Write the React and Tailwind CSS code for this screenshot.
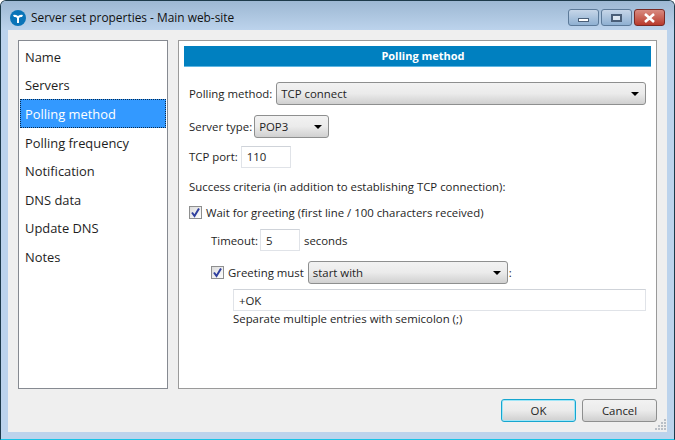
import { useMemo } from "react";

const navItems = [
  { label: "Name", height: "h-[29px]" },
  { label: "Servers", height: "h-[28px]" },
  { label: "Polling method", height: "h-[29px]" },
  { label: "Polling frequency", height: "h-[29px]" },
  { label: "Notification", height: "h-[28px]" },
  { label: "DNS data", height: "h-[29px]" },
  { label: "Update DNS", height: "h-[28px]" },
  { label: "Notes", height: "h-[29px]" },
];

function Select({ value, className }) {
  return (
    <div
      className={`flex items-center justify-between h-[23px] pl-[4px] pr-[6px] rounded-[3px] border border-[#8e8f8f] bg-gradient-to-b from-[#f2f2f2] via-[#ebebeb] to-[#d0d0d0] ${className}`}
    >
      <span>{value}</span>
      <span className="w-0 h-0 border-x-[4px] border-x-transparent border-t-[4px] border-t-black" />
    </div>
  );
}

function TextBox({ value, className }) {
  return (
    <div
      className={`flex items-center h-[22px] pl-[5px] bg-white border border-[#e0e3e8] border-t-[#cfd3d9] ${className}`}
    >
      {value}
    </div>
  );
}

function Checkbox() {
  return (
    <div className="flex items-center justify-center w-[13px] h-[13px] border border-[#8e8f8f] bg-gradient-to-br from-[#dcdcdc] to-white">
      <svg width="11" height="11" viewBox="0 0 11 11">
        <path d="M2 5.5 L4.5 9 L9 1.5" fill="none" stroke="#2f3f9e" strokeWidth="2" />
      </svg>
    </div>
  );
}

function CaptionButton({ children, className }) {
  return (
    <div
      className={`flex items-center justify-center h-[17px] rounded-[3px] border border-[#5c7a99] ${className}`}
    >
      {children}
    </div>
  );
}

function DialogButton({ label, className }) {
  return (
    <div
      className={`flex items-center justify-center w-[75px] h-[23px] rounded-[3px] bg-gradient-to-b from-[#f2f2f2] via-[#ebebeb] to-[#cfcfcf] ${className}`}
    >
      {label}
    </div>
  );
}

function ResizeGrip() {
  const dots = useMemo(() => {
    const out = [];
    for (let row = 0; row < 4; row++) {
      for (let col = 3 - row; col < 4; col++) {
        out.push([col * 3 + 1, row * 3 + 1]);
      }
    }
    return out;
  }, []);

  return (
    <svg className="absolute right-[1px] bottom-[2px]" width="12" height="12" viewBox="0 0 12 12">
      {dots.map(([x, y]) => (
        <rect key={`${x}-${y}`} x={x} y={y} width="2" height="2" fill="#b9bfc6" />
      ))}
    </svg>
  );
}

export default function App() {
  return (
    <div className="flex flex-col w-[675px] h-[440px] overflow-hidden border border-[#1d3a4a] border-b-[#17c3e6] rounded-t-[6px] bg-[#bcd3ec] font-['Open_Sans','Noto_Sans',sans-serif] text-[11.4px] text-[#1e1e1e]">
      {/* TITLE BAR */}
      <div className="flex items-center h-[29px] shrink-0 pt-[4px] pl-[9px] pr-[9px] bg-gradient-to-b from-[#9db8d3] to-[#bcd3ec]">
        <div className="flex items-center justify-center w-[16px] h-[16px] rounded-full bg-[#0a74b8]">
          <svg width="12" height="12" viewBox="0 0 12 12">
            <path d="M1 3 Q3 2 6 4 Q9 2 11 3 L10 5 Q8 4.5 7 6 L7 11 L5 11 L5 6 Q4 4.5 2 5 Z" fill="white" />
          </svg>
        </div>
        <span className="ml-[5px] text-[11.9px] text-[#111]">Server set properties - Main web-site</span>
        <div className="flex gap-[2px] ml-auto">
          <CaptionButton className="w-[31px] bg-gradient-to-b from-[#c6d6e8] to-[#8fb0d2]">
            <div className="w-[11px] h-[4px] mt-[4px] bg-white border border-[#4a5f78]" />
          </CaptionButton>
          <CaptionButton className="w-[31px] bg-gradient-to-b from-[#c6d6e8] to-[#8fb0d2]">
            <div className="w-[11px] h-[8px] bg-white/60 border-2 border-[#4a5f78]" />
          </CaptionButton>
          <CaptionButton className="w-[31px] border-[#7a2a24] bg-gradient-to-b from-[#d88a80] to-[#b8392c]">
            <svg width="13" height="10" viewBox="0 0 13 10">
              <path d="M2 1 L11 9 M11 1 L2 9" stroke="white" strokeWidth="2.6" />
            </svg>
          </CaptionButton>
        </div>
      </div>

      {/* CLIENT AREA */}
      <div className="relative flex flex-col flex-1 mx-[7px] mb-[7px] pt-[10px] px-[10px] bg-[#efefef]">
        <div className="flex gap-[10px] h-[349px]">
          {/* NAV LIST */}
          <div className="w-[150px] p-[1px] bg-white border border-[#868a91]">
            <div className="flex flex-col text-[12.9px]">
              {navItems.map((item) => (
                <div
                  key={item.label}
                  className={`flex items-center pt-[2px] ${item.height} ${
                    item.label === "Polling method"
                      ? "pl-[4px] bg-[#3399ff] text-white border border-dotted border-[#0b2a4a]"
                      : "pl-[5px]"
                  }`}
                >
                  {item.label}
                </div>
              ))}
            </div>
          </div>

          {/* MAIN PANEL */}
          <div className="flex-1 p-[5px] bg-white border border-[#9a9a9a]">
            <div className="flex items-center justify-center h-[21px] pl-[11px] bg-[#0080c0] border-b border-[#5fb6e2] font-bold text-[11px] text-white">
              Polling method
            </div>

            <div className="flex flex-col pl-[5px] pr-[5px] pt-[15px]">
              <div className="flex items-center gap-[4px]">
                <span>Polling method:</span>
                <Select value="TCP connect" className="flex-1" />
              </div>

              <div className="flex items-center gap-[2px] mt-[10px]">
                <span>Server type:</span>
                <Select value="POP3" className="w-[75px]" />
              </div>

              <div className="flex items-center gap-[3px] mt-[8px]">
                <span>TCP port:</span>
                <TextBox value="110" className="w-[50px]" />
              </div>

              <div className="mt-[10px] leading-[18px]">
                Success criteria (in addition to establishing TCP connection):
              </div>

              <div className="flex items-center gap-[4px] mt-[8px]">
                <Checkbox />
                <span>Wait for greeting (first line / 100 characters received)</span>
              </div>

              <div className="flex items-center gap-[2px] mt-[8px] pl-[22px]">
                <span>Timeout:</span>
                <TextBox value="5" className="w-[40px]" />
                <span className="ml-[2px]">seconds</span>
              </div>

              <div className="flex items-center mt-[10px] pl-[22px]">
                <Checkbox />
                <span className="ml-[4px]">Greeting must</span>
                <Select value="start with" className="w-[200px] ml-[4px]" />
                <span className="ml-[1px]">:</span>
              </div>

              <div className="flex flex-col pl-[44px] mt-[5px]">
                <TextBox value="+OK" className="w-full" />
                <div className="leading-[16px]">Separate multiple entries with semicolon (;)</div>
              </div>
            </div>
          </div>
        </div>

        {/* FOOTER */}
        <div className="flex justify-end gap-[6px] mt-[10px]">
          <DialogButton
            label="OK"
            className="border border-[#16a6cf] shadow-[inset_0_0_0_1px_#9fe6f8]"
          />
          <DialogButton label="Cancel" className="border border-[#8e8f8f]" />
        </div>

        <ResizeGrip />
      </div>
    </div>
  );
}
